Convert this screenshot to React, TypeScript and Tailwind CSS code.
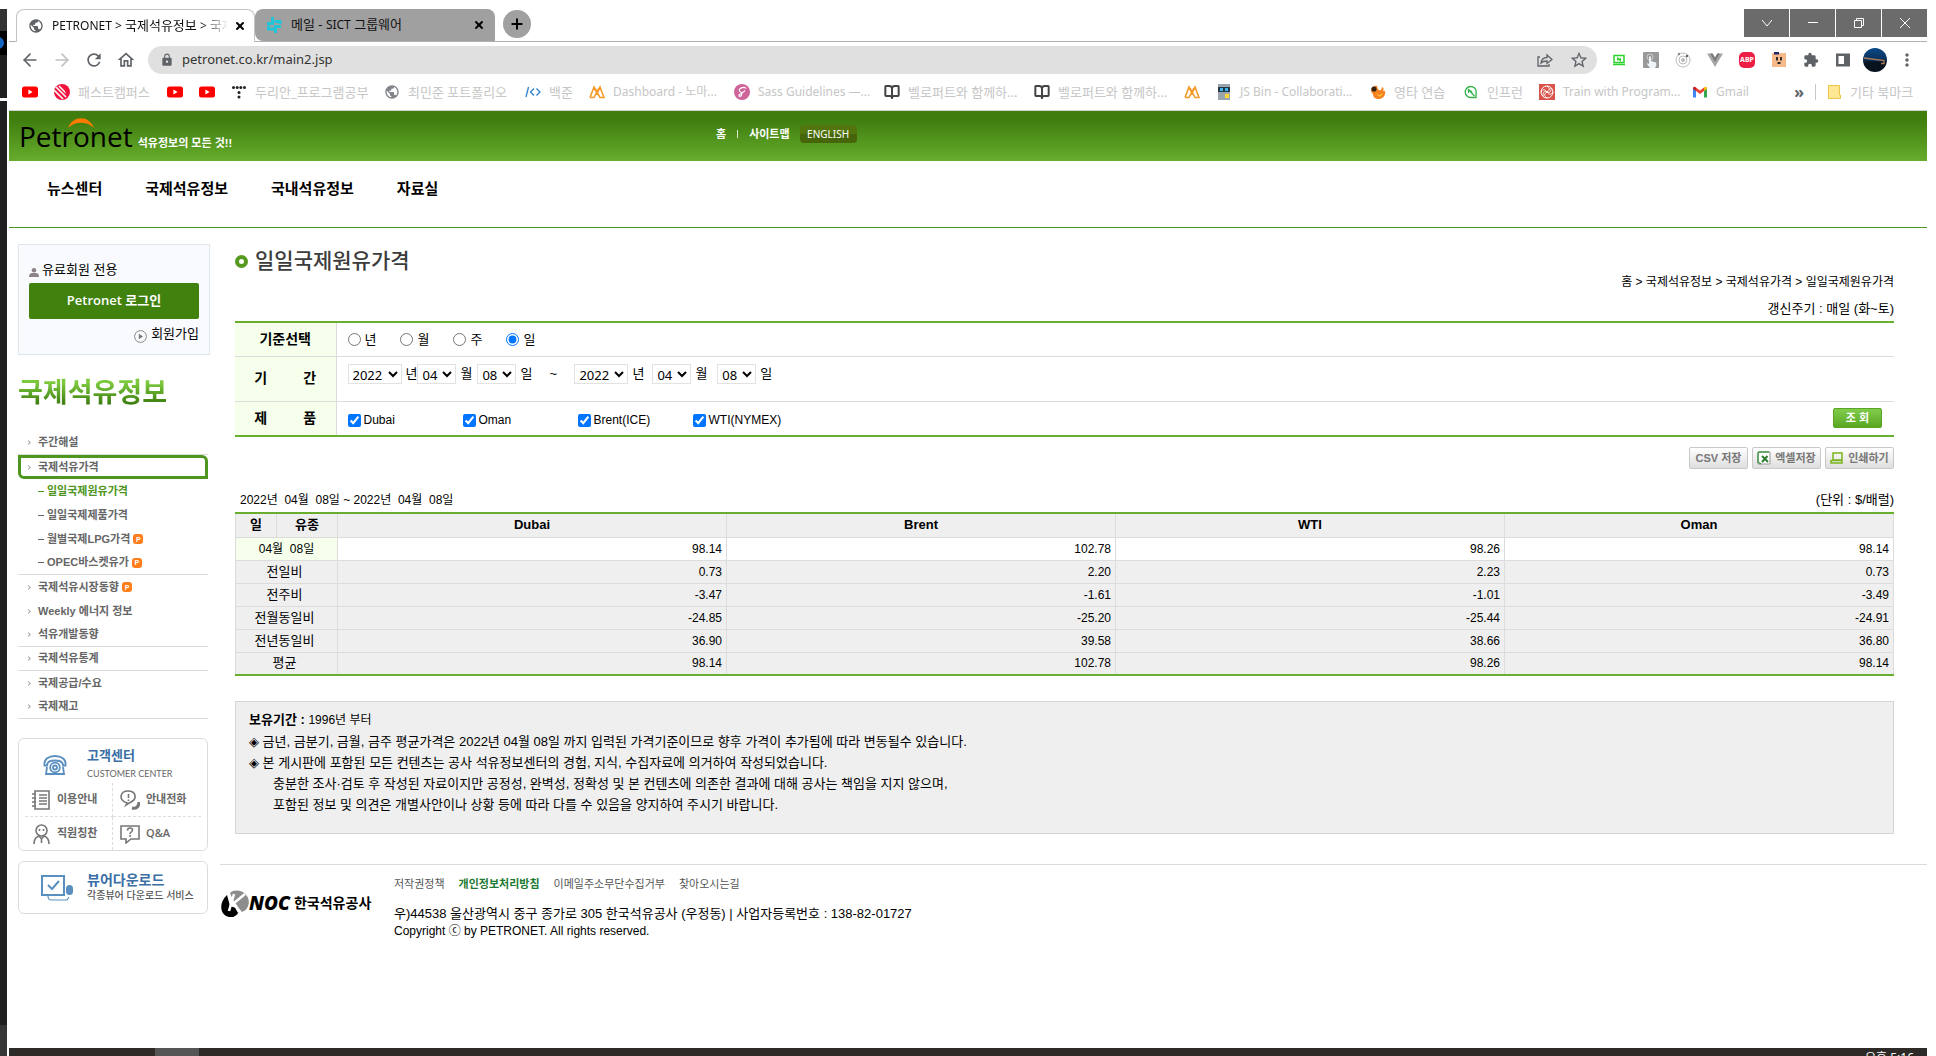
import React from 'react';
import {
  ArrowLeft,
  ArrowRight,
  BookOpen,
  Minus,
  Plus,
  X,
  ChevronDown,
} from 'lucide-react';
import { MdRefresh, MdOutlineHome, MdStarBorder, MdExtension, MdMoreVert, MdPublic, MdLock } from 'react-icons/md';

const ko = "font-['Liberation_Sans','Noto_Sans_CJK_KR',sans-serif]";
const ui = "font-['Noto_Sans','Noto_Sans_CJK_KR',sans-serif]";

/* ---------- bookmark icons ---------- */

const Youtube = () => (
  <svg className="h-4 w-4" viewBox="0 0 16 16">
    <rect x="0" y="2.5" width="16" height="11" rx="2.5" fill="#f00" />
    <path d="M6.4 5.6v4.8L10.6 8z" fill="#fff" />
  </svg>
);
const Campus = () => (
  <svg className="h-4 w-4" viewBox="0 0 16 16">
    <circle cx="8" cy="8" r="8" fill="#f0143c" />
    <path d="M0 6l9 9M2 3l10 10M5 2l8 8" stroke="#fff" strokeWidth="1.6" />
    <path d="M6 1c4 0 8 3 9 7l-3 4C12 7 9 3 6 1z" fill="#f0143c" />
  </svg>
);
const Dots = () => (
  <svg className="h-4 w-4" viewBox="0 0 16 16" fill="#222">
    <circle cx="2.500" cy="3.500" r="1.500" /><circle cx="6.200" cy="3.500" r="1.500" /><circle cx="9.800" cy="3.500" r="1.500" /><circle cx="13.500" cy="3.500" r="1.500" />
    <circle cx="8" cy="8.500" r="1.500" /><circle cx="8" cy="13" r="1.500" />
  </svg>
);
const Globe = () => <MdPublic className="h-4 w-4 text-[#80868b]" />;
const Baekjoon = () => (
  <svg className="h-4 w-4" viewBox="0 0 16 16" fill="none" stroke="#2f80d0" strokeWidth="1.3">
    <path d="M3.500 3L1 13M9 4.500L5.500 8 9 11.500M11.500 4.500L15 8l-3.500 3.500" />
  </svg>
);
const Mango = () => (
  <svg className="h-4 w-4" viewBox="0 0 16 16" fill="none" stroke="#f79a28" strokeWidth="1.6">
    <path d="M1 13.500L5 3l3 6.500L11 3l4 10.500h-4L6 4M1 13.500h4L10 4" />
  </svg>
);
const Sass = () => (
  <svg className="h-4 w-4" viewBox="0 0 16 16">
    <circle cx="8" cy="8" r="8" fill="#cf649a" />
    <path d="M12 4.500C10 2 4 4.500 5.500 7c1 1.500 3 1.500 2 4s-3.500 1-2-.5 4.500-2 5.500-4" fill="none" stroke="#fff" strokeWidth="1.2" />
  </svg>
);
const Book = () => <BookOpen className="h-4 w-4 text-[#444]" strokeWidth={3} />;
const Robot = () => (
  <svg className="h-4 w-4" viewBox="0 0 16 16">
    <rect x="2" y="0" width="12" height="16" fill="#9aa5ad" />
    <rect x="2" y="3" width="12" height="5" fill="#233746" />
    <rect x="4" y="4" width="3" height="3" fill="#3cb6f0" /><rect x="9" y="4" width="3" height="3" fill="#3cb6f0" />
    <rect x="9" y="10" width="4" height="4" fill="#fdd835" />
  </svg>
);
const Fire = () => (
  <svg className="h-4 w-4" viewBox="0 0 16 16">
    <path d="M1 6c1-3 4-5 6-4 1 2 0 3 2 4s3-1 3-3c2 1 2 2 1 4h2c1 4-2 8-6 8S3 13 3 10c-1-1-2-2-2-4z" fill="#f58220" />
    <circle cx="4" cy="5" r="2.6" fill="#332211" />
    <path d="M6 9c2 3 5 2 7 0-1 4-5 5-7 0z" fill="#fbc02d" />
  </svg>
);
const Leaf = () => (
  <svg className="h-4 w-4" viewBox="0 0 16 16" fill="none" stroke="#35b04a" strokeWidth="1.3">
    <path d="M13 13.500H8A5.500 5.500 0 1 1 13.200 8zM5.500 5.500l6 6.500M5.500 9V5.500L9 8" />
  </svg>
);
const Swirl = () => (
  <svg className="h-4 w-4" viewBox="0 0 16 16">
    <rect width="16" height="16" fill="#d9534a" />
    <g fill="none" stroke="#fff" strokeWidth="1">
      <circle cx="8" cy="8" r="6" />
      <path d="M8 2c3 2 3 4 0 6M14 8c-2 3-4 3-6 0M8 14c-3-2-3-4 0-6M2 8c2-3 4-3 6 0M12 4c0 4-1 5-4 4M4 12c0-4 1-5 4-4" />
    </g>
  </svg>
);
const Gmail = () => (
  <svg className="h-4 w-4" viewBox="0 0 16 16">
    <path d="M1 13.500V4l3 2v7.500z" fill="#4285f4" />
    <path d="M12 13.500V6l3-2v9.500z" fill="#34a853" />
    <path d="M4 3.500l4 3 4-3V7L8 10 4 7z" fill="#ea4335" />
    <path d="M1 4.500C1 2.500 2.500 2 4 3.500V7L1 5z" fill="#c5221f" />
    <path d="M15 4.500c0-2-1.500-2.500-3-1V7l3-2z" fill="#fbbc04" />
  </svg>
);

const bookmarks: { icon: React.FC; label?: string; w?: string }[] = [
  { icon: Youtube },
  { icon: Campus, label: '패스트캠퍼스', w: 'w-[73px] text-[13px]' },
  { icon: Youtube },
  { icon: Youtube },
  { icon: Dots, label: '두리안_프로그램공부', w: 'w-[113px] text-[13px]' },
  { icon: Globe, label: '최민준 포트폴리오', w: 'w-[101px] text-[13px]' },
  { icon: Baekjoon, label: '백준', w: 'w-6 text-[13px]' },
  { icon: Mango, label: 'Dashboard - 노마...', w: 'w-[105px] text-[12px]' },
  { icon: Sass, label: 'Sass Guidelines —...', w: 'w-[110px] text-[12px]' },
  { icon: Book, label: '벨로퍼트와 함께하...', w: 'w-[110px] text-[13px]' },
  { icon: Book, label: '벨로퍼트와 함께하...', w: 'w-[110px] text-[13px]' },
  { icon: Mango },
  { icon: Robot, label: 'JS Bin - Collaborati...', w: 'w-[114px] text-[12px]' },
  { icon: Fire, label: '영타 연습', w: 'w-[53px] text-[13px]' },
  { icon: Leaf, label: '인프런', w: 'w-9 text-[13px]' },
  { icon: Swirl, label: 'Train with Program...', w: 'w-[113px] text-[12px]' },
  { icon: Gmail, label: 'Gmail', w: 'w-8 text-[12px]' },
];

/* ---------- extension icons ---------- */

const ExtScreen = () => (
  <svg className="h-4 w-4" viewBox="0 0 16 16" fill="none" stroke="#2fd32b" strokeWidth="1.5">
    <path d="M3 3.500h10v7H3zM2 12.500h12" /><path d="M6.700 8.500V6l2.600 2.500V6" strokeWidth="1.2" />
  </svg>
);
const ExtTouch = () => (
  <svg className="h-4 w-4" viewBox="0 0 16 16">
    <rect width="16" height="16" rx="1" fill="#999" />
    <circle cx="7" cy="5" r="3" fill="none" stroke="#ccc" />
    <path d="M6 5c0-1 2-1 2 0v4l5 1.500c1 2 0 4-1 5.500H7l-3-4c0-1 1-1 2 0z" fill="#eef3f8" />
  </svg>
);
const ExtOrbit = () => (
  <svg className="h-4 w-4" viewBox="0 0 16 16" fill="none" stroke="#bbb">
    <circle cx="8" cy="8" r="7" /><circle cx="8" cy="8" r="4" />
    <circle cx="8" cy="8" r="1.5" fill="#bbb" /><circle cx="12" cy="4" r="1.2" fill="#666" stroke="none" />
    <circle cx="4" cy="2" r="1.2" fill="#888" stroke="none" />
  </svg>
);
const ExtVue = () => (
  <svg className="h-4 w-4" viewBox="0 0 16 16">
    <path d="M0 1.500h5L8 7l3-5.500h5L8 15z" fill="#a6a6a6" />
    <path d="M3.200 1.500h2.600L8 5.400l2.200-3.900h2.600L8 10z" fill="#7a7a7a" />
  </svg>
);
const ExtAbp = () => (
  <span className="flex h-4 w-4 items-center justify-center rounded-[5px] bg-[#ed1e45] text-[7px] font-bold text-white">ABP</span>
);
const ExtFace = () => (
  <svg className="h-4 w-4" viewBox="0 0 16 16">
    <rect x="1" y="1" width="14" height="14" fill="#f5b98a" />
    <rect x="3" y="0" width="5" height="2.5" fill="#1d2b6b" />
    <path d="M6 5v3.500M10 5v3.500M6.500 11h3" stroke="#222" strokeWidth="1.8" />
  </svg>
);
const ExtPanel = () => (
  <svg className="h-4 w-4" viewBox="0 0 16 16">
    <path d="M1 1.500h14v13H1zM3.500 4v8H9V4z" fillRule="evenodd" fill="#5f6368" />
  </svg>
);
const Avatar = () => (
  <svg className="h-6 w-6" viewBox="0 0 24 24">
    <defs>
      <linearGradient id="sky" x1="0" y1="0" x2="0" y2="1">
        <stop offset="0" stopColor="#0a4a8a" /><stop offset=".5" stopColor="#0b2f57" /><stop offset=".6" stopColor="#07121f" />
      </linearGradient>
    </defs>
    <circle cx="12" cy="12" r="12" fill="url(#sky)" />
    <path d="M1 10l20 2.500v3h-3" fill="none" stroke="#a8795a" strokeWidth="1.3" />
  </svg>
);

const winBtn = 'flex h-7 w-[45px] items-center justify-center bg-[#6b6b6b]';

function BrowserChrome() {
  return (
    <header className={`${ui} shrink-0`}>
      <div className="flex h-[33px] items-end border-b border-[#b0b0b0] pl-[7px]">
        <div className="-mb-px flex h-[33px] w-[239px] items-center rounded-t-lg border border-b-0 border-[#c4c4c4] bg-white pr-2 pb-px pl-[11px]">
          <MdPublic className="h-4 w-4 shrink-0 text-[#5f6368]" />
          <span className="ml-2 w-[176px] overflow-hidden text-[12px] whitespace-nowrap text-[#111] mask-r-from-85%">
            PETRONET &gt; <span className="text-[13px]">국제석유정보</span> &gt; <span className="text-[13px]">국제</span>
          </span>
          <button aria-label="탭 닫기" className="ml-auto"><X className="h-3 w-3" strokeWidth={4} /></button>
        </div>
        <div className="flex h-8 w-[240px] items-center rounded-t-lg rounded-bl-lg bg-[#a0a0a0] pr-[10px] pb-px pl-3">
          <svg className="h-4 w-4 shrink-0" viewBox="0 0 16 16" fill="none" stroke="#20c5d8" strokeWidth="3">
            <path d="M5.500 0v6.500H0M7.500 4.500h5.500V7M1.500 8.500v3.500h5.500M8.500 16V9.500H14" />
          </svg>
          <span className="ml-2 text-[13px] whitespace-nowrap text-[#111]">메일 - <span className="text-[12px]">SICT</span> 그룹웨어</span>
          <button aria-label="탭 닫기" className="ml-auto"><X className="h-3 w-3" strokeWidth={4} /></button>
        </div>
        <button aria-label="새 탭" className="mb-[3px] ml-2 flex h-7 w-7 items-center justify-center rounded-full bg-[#a0a0a0]">
          <Plus className="h-4 w-4" strokeWidth={3} />
        </button>
        <div className="ml-auto flex gap-px self-start text-white">
          <button aria-label="탭 검색" className={winBtn}>
            <svg className="h-[10px] w-[10px]" viewBox="0 0 10 10" fill="none" stroke="#fff"><path d="M0 2l5 6 5-6" /></svg>
          </button>
          <button aria-label="최소화" className={winBtn}>
            <svg className="h-[10px] w-[10px]" viewBox="0 0 10 10" fill="none" stroke="#fff"><path d="M0 4.500h10" /></svg>
          </button>
          <button aria-label="이전 크기로" className={winBtn}>
            <svg className="h-[10px] w-[10px]" viewBox="0 0 10 10" fill="none" stroke="#fff"><path d="M.5 2.500h7v7h-7zM2.500 2.500v-2h7v7h-2" /></svg>
          </button>
          <button aria-label="닫기" className={winBtn}>
            <svg className="h-[10px] w-[10px]" viewBox="0 0 10 10" fill="none" stroke="#fff"><path d="M0 0l10 10M10 0L0 10" /></svg>
          </button>
        </div>
      </div>

      <div className="flex h-[37px] items-center pr-[10px] pb-px pl-[11px] text-[#5f6368]">
        <div className="flex gap-3">
          <button aria-label="뒤로"><ArrowLeft className="h-5 w-5" /></button>
          <button aria-label="앞으로" className="text-[#c0c0c0]"><ArrowRight className="h-5 w-5" /></button>
          <button aria-label="새로고침"><MdRefresh className="h-5 w-5" /></button>
          <button aria-label="홈"><MdOutlineHome className="h-5 w-5" /></button>
        </div>
        <div className="mr-[14px] ml-3 flex h-7 flex-1 items-center gap-2 rounded-full bg-[#e0e0e0] pr-2 pl-3">
          <MdLock className="h-[14px] w-[14px]" />
          <input
            aria-label="주소"
            defaultValue="petronet.co.kr/main2.jsp"
            className="flex-1 bg-transparent text-[13px] text-[#333] outline-none"
          />
          <svg className="h-4 w-4" viewBox="0 0 16 16" fill="none" stroke="#5f6368" strokeWidth="1.3">
            <path d="M3 5H1v9h11v-2M4 11c.5-4 3-5.500 6-5.500V3l5 4.500-5 4V9C7.500 9 5.500 9.500 4 11z" />
          </svg>
          <MdStarBorder className="ml-2 h-5 w-5" />
        </div>
        <div className="flex items-center gap-4">
          <ExtScreen /><ExtTouch /><ExtOrbit /><ExtVue /><ExtAbp /><ExtFace />
          <MdExtension className="h-4 w-4" /><ExtPanel />
        </div>
        <div className="ml-3 flex items-center gap-[10px]">
          <Avatar />
          <button aria-label="메뉴"><MdMoreVert className="h-5 w-5" /></button>
        </div>
      </div>

      <nav className="flex h-8 items-center border-b border-[#d0d0d0] pr-[13px] pb-[6px] pl-[13px] text-[#c6c6c6]">
        <div className="flex gap-4">
          {bookmarks.map(({ icon: Icon, label, w }, i) => (
            <a key={i} href="#" aria-label={label ?? '북마크'} className="flex items-center gap-2">
              <Icon />
              {label && <span className={`${w} leading-4 whitespace-nowrap`}>{label}</span>}
            </a>
          ))}
        </div>
        <span className="ml-auto text-[16px] leading-4 font-bold text-[#5f6368]">»</span>
        <span className="ml-[11px] h-4 w-px bg-[#c8c8c8]" />
        <a href="#" className="ml-[10px] flex items-center gap-2 whitespace-nowrap">
          <svg className="h-4 w-4" viewBox="0 0 16 16"><path d="M2.500 1.500h11v9.500h1v3.500h-12z" fill="#ffe793" stroke="#eec643" /></svg>
          <span className="w-16 text-[13px] leading-4">기타 북마크</span>
        </a>
      </nav>
    </header>
  );
}

function SiteHeader() {
  return (
    <>
      <div className="flex h-[50px] shrink-0 bg-linear-to-b from-[#3e7d0e] from-15% to-[#67ad2c]">
        <a href="#" className="flex w-[707px] items-baseline pl-[10px]">
          <span className="relative font-['Open_Sans',sans-serif] text-[28px] leading-[50px] text-black">
            Petronet
            <svg className="absolute top-[7px] left-[49px] h-[11px] w-[26px]" viewBox="0 0 26 11">
              <path d="M0 10C5-3 21-3 26 10 19 3 7 3 0 10z" fill="#ff7a00" />
            </svg>
          </span>
          <span className={`${ko} ml-[5px] text-[11px] font-bold text-white`}>석유정보의 모든 것!!</span>
        </a>
        <div className={`${ui} flex h-[46px] items-center text-[11px] text-white`}>
          <a href="#" className="font-bold">홈</a>
          <span className="mx-[11px] h-2 w-px bg-white/80" />
          <a href="#" className="font-bold">사이트맵</a>
          <a href="#" className="ml-[10px] flex h-[18px] w-[57px] items-center justify-center rounded bg-linear-to-b from-[#52750d] from-50% to-[#456508] to-50% text-[10px]">
            ENGLISH
          </a>
        </div>
      </div>
      <nav className={`${ko} flex h-[67px] shrink-0 gap-[43px] border-b border-[#4f9320] pt-[17px] pl-[38px] text-[15px] leading-[22px] font-bold text-black`}>
        <a href="#">뉴스센터</a>
        <a href="#">국제석유정보</a>
        <a href="#">국내석유정보</a>
        <a href="#">자료실</a>
      </nav>
    </>
  );
}

const menu = [
  { t: '주간해설', line: true },
  { t: '국제석유가격', current: true },
  { t: '일일국제원유가격', sub: true, active: true },
  { t: '일일국제제품가격', sub: true },
  { t: '월별국제LPG가격', sub: true, paid: true },
  { t: 'OPEC바스켓유가', sub: true, paid: true, line: true },
  { t: '국제석유시장동향', paid: true },
  { t: 'Weekly 에너지 정보' },
  { t: '석유개발동향', line: true },
  { t: '국제석유통계', line: true },
  { t: '국제공급/수요' },
  { t: '국제재고', line: true },
];

function Sidebar() {
  return (
    <aside className={`${ko} w-[192px] shrink-0`}>
      <div className="border border-[#dfe6ec] bg-[#f8fafd] px-[10px] pt-[14px] pb-[9px] text-[13px] text-black">
        <div className="mb-[2px] flex h-[22px] items-center gap-[3px]">
          <svg className="mt-1 h-[9px] w-[10px]" viewBox="0 0 10 9" fill="#8c8486"><circle cx="5" cy="2.3" r="2.3" /><path d="M0 9c0-4 2-4 5-4s5 0 5 4z" /></svg>
          유료회원 전용
        </div>
        <button className="h-9 w-full rounded-xs bg-[#41820f] font-['Open_Sans','Noto_Sans_CJK_KR',sans-serif] text-[13px] font-semibold text-white">Petronet 로그인</button>
        <a href="#" className="mt-1 flex h-[22px] items-center justify-end gap-1">
          <svg className="mt-1 h-[13px] w-[13px]" viewBox="0 0 13 13"><circle cx="6.5" cy="6.5" r="5.9" fill="none" stroke="#888" /><path d="M4.800 3.800v5.400l4.200-2.700z" fill="#777" /></svg>
          회원가입
        </a>
      </div>

      <h2 className="mt-[18px] w-fit bg-linear-to-b from-[#7cc93c] from-25% to-[#3a7a0c] to-80% bg-clip-text text-[27px] leading-[40px] font-bold text-transparent">국제석유정보</h2>

      <ul className="mt-[18px] mr-[2px] text-[11px] font-bold text-[#666]">
        {menu.map((m) => (
          <li
            key={m.t}
            className={
              m.current
                ? 'flex h-6 items-center rounded-tr-md rounded-bl-md border-[3px] border-[#4e9620]'
                : m.line
                  ? 'flex h-6 items-center border-b border-[#dcdcdc]'
                  : 'flex h-6 items-center'
            }
          >
            {m.sub ? (
              <span className={m.active ? 'ml-5 h-px w-[6px] bg-[#4e9620]' : 'ml-5 h-px w-[6px] bg-[#666]'} />
            ) : (
              <svg className={m.current ? 'ml-[7px] h-[5px] w-[3px]' : 'ml-[10px] h-[5px] w-[3px]'} viewBox="0 0 3 5" fill="none" stroke="#888"><path d="M0 .5l2.300 2L0 4.500" /></svg>
            )}
            <a href="#" className={m.active ? 'ml-[3px] text-[#4e9620]' : m.sub ? 'ml-[3px]' : 'ml-[7px]'}>{m.t}</a>
            {m.paid && (
              <span className="ml-[3px] flex h-[10px] w-[10px] items-center justify-center rounded-[3px] bg-[#ff7d1a] text-[7px] leading-none text-white">P</span>
            )}
          </li>
        ))}
      </ul>

      <section className="mt-[19px] mr-[2px] rounded-md border border-[#dcdcdc] px-[6px] pt-2 text-[11px] font-bold text-[#666]">
        <div className="flex items-center gap-5 pl-[18px]">
          <svg className="h-6 w-6" viewBox="0 0 24 24" fill="none" stroke="#5b8fc0" strokeWidth="1.8">
            <path d="M3 12.500H1.500C.5 6 6 3 12 3s11.500 3 10.500 9.500H20C20 9 17 7.500 12 7.500S4 9 4 12.500zM4 14l-1 7h18l-1-7" />
            <circle cx="12" cy="14.5" r="4.8" /><circle cx="12" cy="14.5" r="2" />
          </svg>
          <div>
            <h3 className="text-[13px] leading-[18px] text-[#3a6ea5]">고객센터</h3>
            <p className="font-['Lato',sans-serif] text-[9px] leading-[18px] font-normal">CUSTOMER CENTER</p>
          </div>
        </div>
        <div className="grid grid-cols-2">
          <a href="#" className="flex h-[34px] items-center gap-[6px] border-r border-b border-dashed border-[#ddd] pl-[6px]">
            <svg className="h-5 w-5" viewBox="0 0 20 20" fill="none" stroke="#777" strokeWidth="1.6"><path d="M4 1h14v18H4zM1 4h4M1 8h4M1 12h4M1 16h4M8 5h8M8 8h8M8 11h8M8 14h8" /></svg>
            이용안내
          </a>
          <a href="#" className="flex h-[34px] items-center gap-[6px] border-b border-dashed border-[#ddd] pl-[7px]">
            <svg className="h-5 w-5" viewBox="0 0 20 20" fill="none" stroke="#777" strokeWidth="1.6"><path d="M6 15l1-2C-2 10 0 1 8 1s10 8 2 11.500zM8.500 4v4M8.500 9.500v1.500" /><path d="M12 18c4 1 7-1 7-6" strokeWidth="3" /></svg>
            안내전화
          </a>
          <a href="#" className="flex h-[33px] items-center gap-[6px] border-r border-dashed border-[#ddd] pl-[6px]">
            <svg className="h-5 w-5" viewBox="0 0 20 20" fill="none" stroke="#777" strokeWidth="1.6"><circle cx="10.5" cy="6.5" r="5.5" /><path d="M8.500 5v2M12.500 5v2M3 20c0-5 2-7 5-8l2.500 3 2.500-3c3 1 5 3 5 8M10.500 15v4" /></svg>
            직원칭찬
          </a>
          <a href="#" className="flex h-[33px] items-center gap-[6px] pl-[7px]">
            <svg className="h-5 w-5" viewBox="0 0 20 20" fill="none" stroke="#777" strokeWidth="1.6"><path d="M1 2h18v13h-8l-5 4v-4H1zM7.500 6.500C7.500 3 12.500 3.500 12.500 6c0 2-2.500 2-2.500 4M10 11v2" /></svg>
            <span className="font-['Open_Sans',sans-serif] font-semibold">Q&amp;A</span>
          </a>
        </div>
      </section>

      <a href="#" className="mt-[10px] mr-[2px] flex h-[53px] items-center gap-[14px] rounded-md border border-[#dcdcdc] pl-[22px]">
        <svg className="h-7 w-8 shrink-0" viewBox="0 0 32 28" fill="none" stroke="#5b8fc0" strokeWidth="2">
          <path d="M1 2h22v19H1zM7 11l4 4 7-8" /><path d="M7 22c0 4 2 4 4 4h15l2-3" strokeWidth="1.2" /><rect x="26" y="12" width="5" height="8" rx="2.5" fill="#5b8fc0" />
        </svg>
        <span>
          <span className="block text-[14px] leading-[17px] font-bold whitespace-nowrap text-[#3a6ea5]">뷰어다운로드</span>
          <span className="block text-[10px] leading-[14px] font-medium whitespace-nowrap text-[#555]">각종뷰어 다운로드 서비스</span>
        </span>
      </a>
    </aside>
  );
}

function Pick({ label, value }: { label: string; value: string }) {
  return (
    <select
      aria-label={label}
      defaultValue={value}
      className={
        value.length > 2
          ? "h-5 w-[54px] border border-[#e2e2e2] bg-white font-['Noto_Sans',sans-serif] text-[13px] text-black"
          : "h-5 w-[39px] border border-[#e2e2e2] bg-white font-['Noto_Sans',sans-serif] text-[13px] text-black"
      }
    >
      <option>{value}</option>
    </select>
  );
}

const thCls = 'w-[101px] border-r border-[#dcdcdc] bg-[#f5ffeb] text-center text-[14px] font-bold';

function SearchForm() {
  return (
    <table className="w-full border-collapse border-y-2 border-[#6aae30] text-[13px] text-black">
      <tbody>
        <tr className="h-[34px] border-b border-[#dcdcdc]">
          <th className={thCls}>기준선택</th>
          <td className="pl-[11px]">
            <div className="flex gap-6">
              {['년', '월', '주', '일'].map((t) => (
                <label key={t} className="flex items-center gap-1">
                  <input type="radio" name="base" defaultChecked={t === '일'} className="m-0 h-[13px] w-[13px]" />
                  {t}
                </label>
              ))}
            </div>
          </td>
        </tr>
        <tr className="h-[45px] border-b border-[#dcdcdc]">
          <th className={thCls}><span className="inline-flex w-[62px] justify-between"><span>기</span><span>간</span></span></th>
          <td className="pl-[11px]">
            <div className="mb-[10px] flex items-center">
              <Pick label="시작 년" value="2022" /><span className="ml-1">년</span>
              <Pick label="시작 월" value="04" /><span className="mr-[5px] ml-1">월</span>
              <Pick label="시작 일" value="08" /><span className="ml-1">일</span>
              <span className="mx-[15px] w-3 text-center">~</span>
              <Pick label="종료 년" value="2022" /><span className="mr-2 ml-1">년</span>
              <Pick label="종료 월" value="04" /><span className="mr-[10px] ml-1">월</span>
              <Pick label="종료 일" value="08" /><span className="ml-1">일</span>
            </div>
          </td>
        </tr>
        <tr className="h-[35px]">
          <th className={thCls}><span className="inline-flex w-[62px] justify-between"><span>제</span><span>품</span></span></th>
          <td className="pr-3 pl-[11px]">
            <div className="flex items-center">
              {['Dubai', 'Oman', 'Brent(ICE)', 'WTI(NYMEX)'].map((t) => (
                <label key={t} className="mt-1 flex w-[115px] items-center gap-[3px] text-[12px]">
                  <input type="checkbox" defaultChecked className="m-0 h-[13px] w-[13px]" />
                  {t}
                </label>
              ))}
              <button className="ml-auto h-5 w-[49px] rounded-xs border border-[#5aa524] bg-linear-to-b from-[#82cc4c] to-[#58a820] text-[11px] leading-none font-bold text-white">조 회</button>
            </div>
          </td>
        </tr>
      </tbody>
    </table>
  );
}

const rows: [string, string, string, string, string][] = [
  ['04월  08일', '98.14', '102.78', '98.26', '98.14'],
  ['전일비', '0.73', '2.20', '2.23', '0.73'],
  ['전주비', '-3.47', '-1.61', '-1.01', '-3.49'],
  ['전월동일비', '-24.85', '-25.20', '-25.44', '-24.91'],
  ['전년동일비', '36.90', '39.58', '38.66', '36.80'],
  ['평균', '98.14', '102.78', '98.26', '98.14'],
];

function PriceTable() {
  return (
    <table className="w-full table-fixed border-collapse border-y-2 border-[#6aae30] text-[13px] text-black">
      <colgroup>
        <col className="w-[41px]" /><col className="w-[61px]" /><col /><col /><col /><col />
      </colgroup>
      <thead>
        <tr className="h-6 bg-[#efefef]">
          {['일', '유종', 'Dubai', 'Brent', 'WTI', 'Oman'].map((h) => (
            <th key={h} className="border border-t-0 border-[#dcdcdc] leading-5">{h}</th>
          ))}
        </tr>
      </thead>
      <tbody>
        {rows.map(([name, ...values], r) => (
          <tr key={name} className={r === 0 ? 'h-[23px] bg-white' : 'h-[23px] bg-[#efefef]'}>
            <th colSpan={2} className={r === 0 ? 'border-x border-b border-[#dcdcdc] bg-[#f5ffeb] text-[12px] leading-5 font-normal whitespace-pre' : 'border-x border-b border-[#dcdcdc] pr-1 leading-5 font-normal'}>{name}</th>
            {values.map((v, i) => (
              <td key={i} className="border-x border-b border-[#dcdcdc] pr-1 text-right text-[12px] leading-5">{v}</td>
            ))}
          </tr>
        ))}
      </tbody>
    </table>
  );
}

const exportBtn = 'flex h-[22px] items-center justify-center gap-1 rounded-xs border border-[#c8c8c8] bg-linear-to-b from-white to-[#dedede] font-bold text-[#777]';

function Main() {
  return (
    <main className={`${ko} mr-[33px] ml-[25px] min-w-0 flex-1 text-black`}>
      <h1 className="flex items-center gap-[7px] pt-[3px] text-[21px] leading-[28px] font-medium text-[#3c3c3c]">
        <span className="h-[13px] w-[13px] rounded-full border-4 border-[#56991f]" />
        일일국제원유가격
      </h1>
      <p className="text-right text-[12px] leading-[14px]">홈 &gt; 국제석유정보 &gt; 국제석유가격 &gt; 일일국제원유가격</p>
      <p className="mt-[10px] mb-[2px] text-right text-[13px] leading-5">갱신주기 : 매일 (화~토)</p>

      <SearchForm />

      <div className="mt-[10px] flex justify-end gap-1 text-[11px]">
        <button className={`${exportBtn} w-[59px]`}>CSV 저장</button>
        <button className={`${exportBtn} w-[69px]`}>
          <svg className="h-[14px] w-[14px]" viewBox="0 0 14 14"><path d="M1 1h12v12H1z" fill="#fff" stroke="#9a9a9a" /><path d="M12 1H3Q1 1 1 3v8l3 2" fill="none" stroke="#4a9a50" strokeWidth="1.5" /><path d="M5 5l6 6M10.500 5l-5.500 6" stroke="#2d7d32" strokeWidth="2" /></svg>
          엑셀저장
        </button>
        <button className={`${exportBtn} w-[69px]`}>
          <svg className="h-[14px] w-[14px]" viewBox="0 0 14 14" fill="none" stroke="#7ab51d" strokeWidth="1.5"><path d="M3 2h9v7H3zM1 9.500h11V12H1z" /></svg>
          인쇄하기
        </button>
      </div>

      <div className="mt-[21px] mb-[2px] flex justify-between pl-[5px] text-[12px] leading-5">
        <span className="whitespace-pre">2022년  04월  08일 ~ 2022년  04월  08일</span>
        <span className="text-[13px]">(단위 : $/배럴)</span>
      </div>

      <PriceTable />

      <section className="mt-[25px] border border-[#d5d5d5] bg-[#efefef] px-[13px] pt-[7px] pb-[18px] text-[13px] leading-[21px]">
        <p><strong>보유기간 :</strong> <span className="text-[12px]">1996년 부터</span></p>
        <p>◈ 금년, 금분기, 금월, 금주 평균가격은 2022년 04월 08일 까지 입력된 가격기준이므로 향후 가격이 추가됨에 따라 변동될수 있습니다.</p>
        <p>◈ 본 게시판에 포함된 모든 컨텐츠는 공사 석유정보센터의 경험, 지식, 수집자료에 의거하여 작성되었습니다.</p>
        <p className="pl-6">충분한 조사·검토 후 작성된 자료이지만 공정성, 완벽성, 정확성 및 본 컨텐츠에 의존한 결과에 대해 공사는 책임을 지지 않으며,</p>
        <p className="pl-6">포함된 정보 및 의견은 개별사안이나 상황 등에 따라 다를 수 있음을 양지하여 주시기 바랍니다.</p>
      </section>
    </main>
  );
}

function Footer() {
  return (
    <footer className={`${ko} flex border-t border-[#dcdcdc] text-black`}>
      <div className="flex h-[76px] w-[174px] items-center pl-px">
        <svg className="h-[27px] w-7" viewBox="0 0 28 27">
          <path d="M9 3C13-1 22 0 26 6s1 14-5 16L13 12z" fill="#8d8d8d" />
          <path d="M6 5C-1 11-2 22 5 26c6 3 13 0 13-7l-9-3z" fill="#000" />
          <path d="M13 4L8 21M24 4l-11 9 5 9" fill="none" stroke="#fff" strokeWidth="2.6" />
        </svg>
        <span className="font-['Noto_Sans',sans-serif] text-[19px] font-black italic">NOC</span>
        <span className="ml-1 text-[14px] font-bold whitespace-nowrap">한국석유공사</span>
      </div>
      <div className="pt-[10px]">
        <nav className="flex gap-[14px] text-[11px] leading-[18px] text-[#555]">
          <a href="#">저작권정책</a>
          <a href="#" className="font-bold text-[#1e7a32]">개인정보처리방침</a>
          <a href="#">이메일주소무단수집거부</a>
          <a href="#">찾아오시는길</a>
        </nav>
        <address className="mt-3 text-[13px] leading-[17px] not-italic">
          우)44538 울산광역시 중구 종가로 305 한국석유공사 (우정동) | 사업자등록번호 : 138-82-01727
          <br />
          <span className="text-[12px]">Copyright ⓒ by PETRONET. All rights reserved.</span>
        </address>
      </div>
    </footer>
  );
}

export default function App() {
  return (
    <div className="flex min-h-screen bg-white">
      <div className="mr-[2px] flex w-[7px] shrink-0 flex-col pt-[9px]">
        <div className="h-[22px] bg-[#333]" />
        <div className="flex h-6 items-center overflow-hidden bg-black"><span className="-ml-2 h-3 w-3 shrink-0 rounded-full bg-[#1565c0]" /></div>
        <div className="h-[43px] bg-[#202020]" />
        <div className="mt-[3px] flex-1 bg-[#202020]" />
        <div className="h-[31px] bg-[#363636]" />
      </div>
      <div className="mr-[9px] flex min-w-0 flex-1 flex-col pt-[9px]">
        <BrowserChrome />
        <SiteHeader />
        <div className="flex flex-1 pt-4 pl-[9px]">
          <Sidebar />
          <div className="flex min-w-0 flex-1 flex-col">
            <div className="flex"><Main /></div>
            <div className="mt-[30px] ml-[10px]"><Footer /></div>
          </div>
        </div>
        <div className="flex h-2 shrink-0 overflow-hidden bg-[#2e2a27]">
          <span className="ml-[146px] w-11 bg-[#555]" />
          <span className={`${ui} mr-[13px] ml-auto pt-1 text-[12px] leading-none text-white`}>오후 5:16</span>
        </div>
      </div>
    </div>
  );
}
